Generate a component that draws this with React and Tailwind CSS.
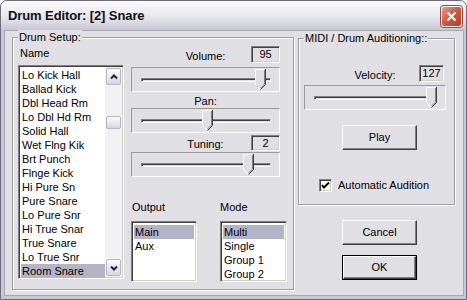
import React from "react";

const items = [
  "Lo Kick Hall",
  "Ballad Kick",
  "Dbl Head Rm",
  "Lo Dbl Hd Rm",
  "Solid Hall",
  "Wet Flng Kik",
  "Brt Punch",
  "Flnge Kick",
  "Hi Pure Sn",
  "Pure Snare",
  "Lo Pure Snr",
  "Hi True Snar",
  "True Snare",
  "Lo True Snr",
  "Room Snare",
];

function Thumb() {
  return (
    <svg width="11" height="21" viewBox="0 0 11 21">
      <path d="M0.5 0.5 H10.5 V15.5 L5.5 20.5 L0.5 15.5 Z" fill="#e0dfe3" />
      <path d="M0.5 15.5 V0.5 H9.5" stroke="#ffffff" fill="none" />
      <path d="M0.5 15.5 L5 20" stroke="#ffffff" fill="none" />
      <path d="M10.5 0 V15.5 L5.5 20.5" stroke="#404040" fill="none" />
      <path d="M9.5 1 V15 L5.5 19" stroke="#808080" fill="none" />
    </svg>
  );
}

function Slider({ thumb, width }) {
  return (
    <div
      className="relative h-[25px] border border-t-[#9a9aa0] border-l-[#9a9aa0] border-r-white border-b-white flex items-center"
      style={{ width }}
    >
      <div className="ml-[9px] mr-[8px] flex-1 h-[4px] border-t border-l border-t-[#808080] border-l-[#808080] border-b border-r border-b-white border-r-white shadow-[inset_1px_1px_0_#404040]" />
      <div className="absolute top-[1px]" style={{ left: thumb }}>
        <Thumb />
      </div>
    </div>
  );
}

function EditBox({ value, w = "w-[29px]", h = "h-[17px]" }) {
  return (
    <div
      className={`${w} ${h} flex items-center justify-center border border-t-[#808080] border-l-[#808080] border-r-white border-b-white shadow-[inset_1px_1px_0_#404040,inset_-1px_-1px_0_#d4d0c8] bg-[#e0dfe3] leading-none`}
    >
      {value}
    </div>
  );
}

function Button({ children, isDefault }) {
  return (
    <div
      className={`w-[75px] h-[25px] flex items-center justify-center bg-[#e0dfe3] ${
        isDefault ? "border border-black" : ""
      }`}
    >
      <div className="w-full h-full flex items-center justify-center border border-t-white border-l-white border-r-[#404040] border-b-[#404040] shadow-[inset_-1px_-1px_0_#808080]">
        {children}
      </div>
    </div>
  );
}

function GroupBox({ label, className, children }) {
  return (
    <div
      className={`relative border border-[#9d9da1] shadow-[inset_1px_1px_0_#ffffff,1px_1px_0_#ffffff] ${className}`}
    >
      <span className="absolute top-[-8px] left-[5px] px-[1px] bg-[#e0dfe3] leading-[14px]">
        {label}
      </span>
      {children}
    </div>
  );
}

function ListBox({ options, selected, w }) {
  return (
    <div
      className={`${w} h-[61px] bg-white border border-t-[#808080] border-l-[#808080] border-r-white border-b-white shadow-[inset_1px_1px_0_#404040,inset_-1px_-1px_0_#d4d0c8] p-[2px] pt-[3px]`}
    >
      {options.map((o) => (
        <div
          key={o}
          className={`h-[14px] leading-[14px] pl-[1px] ${o === selected ? "bg-[#b4b4c6]" : ""}`}
        >
          {o}
        </div>
      ))}
    </div>
  );
}

function ScrollButton({ up }) {
  return (
    <div className="w-[15px] h-[17px] mx-[1px] rounded-[2px] border border-[#b6b6c4] bg-gradient-to-b from-[#fdfdfe] to-[#d6d6e0] flex items-center justify-center">
      <svg width="8" height="6" viewBox="0 0 8 6">
        <path
          d={up ? "M1 4.5 L4 1.5 L7 4.5" : "M1 1.5 L4 4.5 L7 1.5"}
          stroke="#202030"
          strokeWidth="2"
          fill="none"
        />
      </svg>
    </div>
  );
}

export default function App() {
  return (
    <div className="w-[467px] h-[300px] flex flex-col overflow-hidden bg-[#e0dfe3] border border-[#6c6c7c] rounded-t-[7px] font-['Liberation_Sans',Arial,sans-serif] text-[11px] text-black">
      {/* title bar */}
      <div className="h-[29px] shrink-0 flex items-center justify-between pl-[7px] pr-[4px] bg-gradient-to-b from-[#fbfbfd] via-[#e8e8ee] to-[#c9c9d4] rounded-t-[6px]">
        <span className="font-bold text-[13px] text-[#101018] tracking-[-0.1px]">
          Drum Editor: [2] Snare
        </span>
        <div className="w-[21px] h-[21px] mt-[2px] rounded-[3px] border border-white bg-gradient-to-br from-[#e99a86] via-[#d0563d] to-[#b63a24] flex items-center justify-center shadow-[0_0_0_1px_#9a4a3a]">
          <svg width="11" height="11" viewBox="0 0 11 11">
            <path d="M1.5 1.5 L9.5 9.5 M9.5 1.5 L1.5 9.5" stroke="white" strokeWidth="2" />
          </svg>
        </div>
      </div>

      {/* body frame */}
      <div className="flex-1 flex bg-[#c8c8d4] px-[3px] pb-[3px]">
        <div className="flex-1 flex gap-[4px] pl-[7px] pt-[6px] pr-[8px] bg-[#e0dfe3] border border-[#a8a8b4]">
          {/* Drum Setup */}
          <GroupBox label="Drum Setup:" className="w-[282px] h-[253px] flex pl-[5px] pt-[8px]">
            <div className="w-[106px] flex flex-col">
              <div className="h-[14px] leading-[14px] pl-[2px]">Name</div>
              <div className="mt-[5px] h-[214px] flex bg-white border border-t-[#808080] border-l-[#808080] border-r-white border-b-white shadow-[inset_1px_1px_0_#404040,inset_-1px_-1px_0_#d4d0c8] p-[1px]">
                <div className="flex-1 pt-[1px] pl-[1px]">
                  {items.map((it) => (
                    <div
                      key={it}
                      className={`h-[14px] leading-[14px] pl-[1px] ${
                        it === "Room Snare" ? "bg-[#b4b4c6]" : ""
                      }`}
                    >
                      {it}
                    </div>
                  ))}
                </div>
                <div className="w-[17px] flex flex-col bg-[#f1f1f4] pt-[1px] pb-[1px]">
                  <ScrollButton up />
                  <div className="flex-1">
                    <div className="w-[15px] h-[13px] mx-[1px] mt-[31px] rounded-[2px] border border-[#b6b6c4] bg-gradient-to-b from-[#fdfdfe] to-[#d6d6e0]" />
                  </div>
                  <ScrollButton />
                </div>
              </div>
            </div>

            <div className="ml-[7px] w-[156px] flex flex-col">
              <div className="w-[149px] h-[17px] grid grid-cols-[1fr_auto_1fr] items-end">
                <div />
                <div className="leading-[14px]">Volume:</div>
                <div className="flex justify-end">
                  <EditBox value="95" />
                </div>
              </div>
              <div className="mt-[4px]">
                <Slider thumb={123} width={149} />
              </div>
              <div className="w-[149px] h-[14px] leading-[14px] mt-[2px] text-center">Pan:</div>
              <Slider thumb={70} width={149} />
              <div className="w-[149px] h-[16px] mt-[2px] grid grid-cols-[1fr_auto_1fr] items-end">
                <div />
                <div className="leading-[14px]">Tuning:</div>
                <div className="flex justify-end">
                  <EditBox value="2" h="h-[16px]" />
                </div>
              </div>
              <div className="mt-[1px]">
                <Slider thumb={111} width={149} />
              </div>

              <div className="mt-[23px] flex gap-[23px]">
                <div className="flex flex-col">
                  <div className="h-[14px] leading-[14px] pl-[1px]">Output</div>
                  <div className="mt-[7px]">
                    <ListBox options={["Main", "Aux"]} selected="Main" w="w-[66px]" />
                  </div>
                </div>
                <div className="flex flex-col">
                  <div className="h-[14px] leading-[14px]">Mode</div>
                  <div className="mt-[7px]">
                    <ListBox
                      options={["Multi", "Single", "Group 1", "Group 2"]}
                      selected="Multi"
                      w="w-[67px]"
                    />
                  </div>
                </div>
              </div>
            </div>
          </GroupBox>

          {/* right column */}
          <div className="w-[157px] flex flex-col">
            <GroupBox
              label="MIDI / Drum Auditioning::"
              className="mt-[1px] h-[167px] flex flex-col pl-[5px] pt-[26px]"
            >
              <div className="w-[142px] h-[17px] grid grid-cols-[1fr_auto_1fr] items-end">
                <div />
                <div className="leading-[14px]">Velocity:</div>
                <div className="flex justify-end pr-[2px]">
                  <EditBox value="127" w="w-[25px]" />
                </div>
              </div>
              <div className="mt-[3px]">
                <Slider thumb={121} width={142} />
              </div>
              <div className="mt-[15px] pl-[38px]">
                <Button>Play</Button>
              </div>
              <div className="mt-[27px] pl-[15px] flex items-center gap-[6px]">
                <div className="w-[13px] h-[13px] bg-white border border-t-[#808080] border-l-[#808080] border-r-white border-b-white shadow-[inset_1px_1px_0_#404040,inset_-1px_-1px_0_#d4d0c8] flex items-center justify-center">
                  <svg width="9" height="9" viewBox="0 0 9 9">
                    <path d="M1 4 L3 6.5 L8 1.5" stroke="black" strokeWidth="2" fill="none" />
                  </svg>
                </div>
                <span>Automatic Audition</span>
              </div>
            </GroupBox>
            <div className="mt-[15px] pl-[44px] flex flex-col gap-[10px]">
              <Button>Cancel</Button>
              <Button isDefault>OK</Button>
            </div>
          </div>
        </div>
      </div>
    </div>
  );
}
